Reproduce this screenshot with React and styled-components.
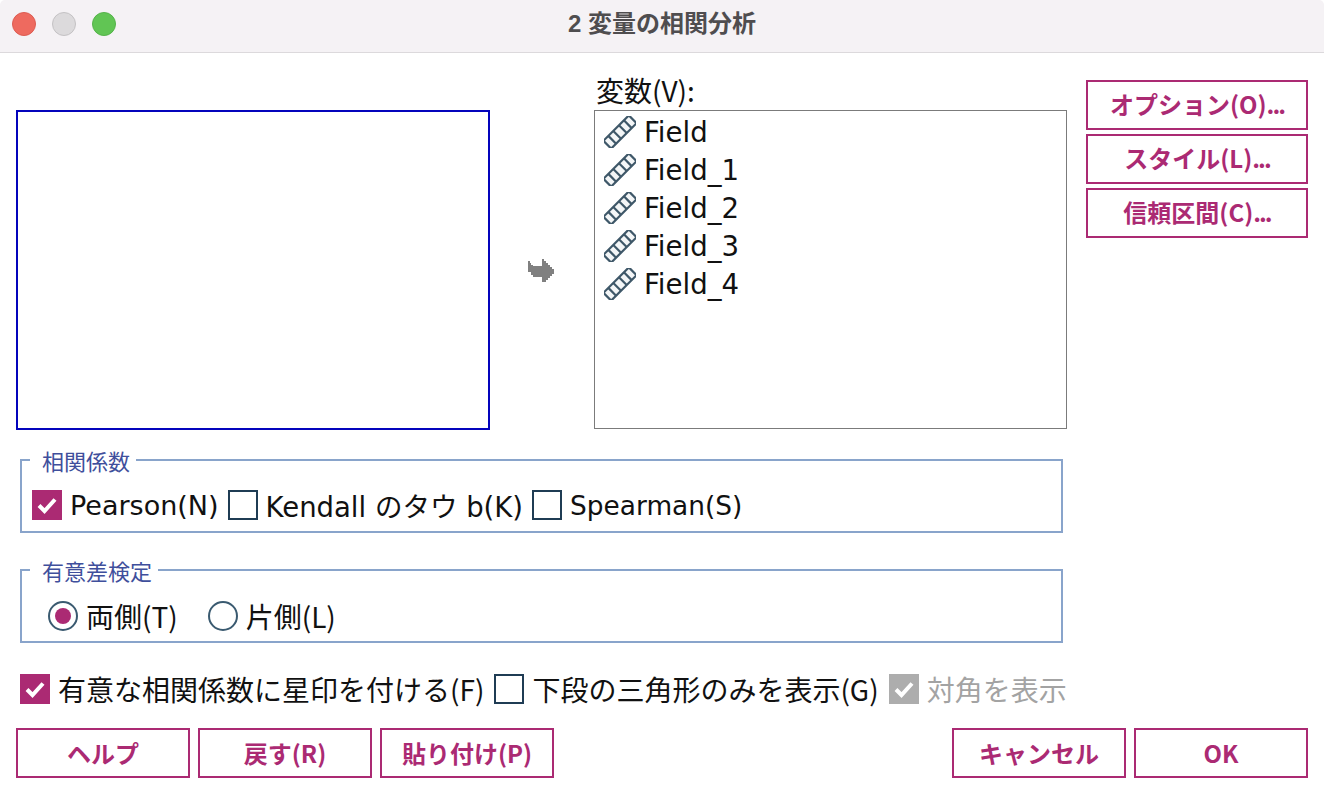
import styled, { createGlobalStyle } from 'styled-components';

const LATIN_FONT = '"DejaVu Sans", "Noto Sans CJK JP", sans-serif';
const CJK_FONT = '"Noto Sans CJK JP", "DejaVu Sans", sans-serif';
const ACCENT = '#ab2a73';

const GlobalStyle = createGlobalStyle`
  html, body {
    margin: 0;
    background: #fff;
  }
  * {
    box-sizing: border-box;
  }
`;

const Window = styled.div`
  width: 1324px;
  height: 800px;
  display: flex;
  flex-direction: column;
  background: #fff;
  font-family: ${LATIN_FONT};
  color: #111;
  overflow: hidden;
`;

const TitleBar = styled.header`
  height: 53px;
  flex: none;
  display: grid;
  grid-template-columns: 1fr auto 1fr;
  align-items: center;
  padding: 0 12px 5px;
  background: #f5f2f5;
  border-bottom: 1px solid #dcd9dc;
  border-radius: 5px 5px 0 0;
`;

const Lights = styled.div`
  display: flex;
  gap: 16px;
`;

const Light = styled.span`
  width: 24px;
  height: 24px;
  border-radius: 50%;
  background: ${(p) => p.$color};
  border: 1px solid ${(p) => p.$edge};
`;

const Title = styled.h1`
  margin: 0;
  font-family: "Liberation Sans", "Noto Sans CJK JP", sans-serif;
  font-size: 24px;
  line-height: 30px;
  font-weight: 700;
  color: #4f4d4f;
`;

const Content = styled.main`
  flex: 1;
  padding: 27px 16px 0;
  display: flex;
  flex-direction: column;
`;

const TopRow = styled.div`
  display: flex;
  height: 350px;
`;

const SourceList = styled.div`
  width: 474px;
  height: 320px;
  margin-top: 30px;
  border: 2px solid #0404bc;
`;

const ArrowColumn = styled.div`
  width: 104px;
  display: flex;
  justify-content: center;
  padding-top: 179px;
`;

const VariableColumn = styled.div`
  width: 473px;
  display: flex;
  flex-direction: column;
`;

const ListLabel = styled.label`
  height: 30px;
  padding-left: 2px;
  font-family: ${CJK_FONT};
  font-size: 28px;
  line-height: 20px;
`;

const VariableList = styled.ul`
  height: 319px;
  margin: 0;
  padding: 2px 0 0 9px;
  list-style: none;
  border: 1px solid #7b7b7b;
`;

const VariableRow = styled.li`
  height: 38px;
  display: flex;
  align-items: center;
  gap: 8px;
  font-size: 27.6px;
`;

const SideButtons = styled.div`
  margin-left: 19px;
  width: 222px;
  display: flex;
  flex-direction: column;
  gap: 4px;
`;

const ActionButton = styled.button`
  width: 174px;
  height: 50px;
  padding: 0 0 2px;
  background: #fff;
  border: 2px solid ${ACCENT};
  color: ${ACCENT};
  font-family: ${CJK_FONT};
  font-size: 24px;
  font-weight: 700;
`;

const SideButton = styled(ActionButton)`
  width: 222px;
  padding-bottom: 4px;
`;

const Dots = styled.span`
  letter-spacing: -2px;
`;

const Group = styled.fieldset`
  width: 1043px;
  height: 85px;
  margin: ${(p) => p.$top} 0 0 4px;
  padding: 0;
  border: 2px solid #89a4cb;
`;

const GroupTitle = styled.legend`
  margin-left: 8px;
  padding: 0 6px 0 12px;
  font-family: ${CJK_FONT};
  font-size: 22px;
  line-height: 24px;
  color: #3f4f9c;
`;

const GroupBody = styled.div`
  display: flex;
  padding: ${(p) => p.$top} 0 0 ${(p) => p.$inset};
  gap: ${(p) => p.$gap};
`;

const Option = styled.label`
  height: 30px;
  display: inline-flex;
  align-items: center;
  gap: 8px;
  font-family: ${(p) => (p.$cjk ? CJK_FONT : LATIN_FONT)};
  font-size: ${(p) => p.$size || '27px'};
  color: ${(p) => (p.$disabled ? '#a3a3a3' : '#111')};
  white-space: nowrap;
`;

const CheckBox = styled.span`
  width: 30px;
  height: 30px;
  flex: none;
  display: flex;
  align-items: center;
  justify-content: center;
  background: ${(p) => (p.$disabled ? '#adadad' : p.$checked ? ACCENT : '#fff')};
  border: ${(p) => (p.$checked || p.$disabled ? 'none' : '2px solid #1f3c54')};
`;

const Radio = styled.span`
  width: 30px;
  height: 30px;
  flex: none;
  display: flex;
  align-items: center;
  justify-content: center;
  border-radius: 50%;
  border: 2px solid #3a5a70;
  &::after {
    content: '';
    width: 16px;
    height: 16px;
    border-radius: 50%;
    background: ${(p) => (p.$checked ? ACCENT : 'transparent')};
  }
`;

const OptionsRow = styled.div`
  margin: 31px 0 0 4px;
  height: 30px;
  display: flex;
  align-items: center;
  gap: 10px;
`;

const Footer = styled.footer`
  margin-top: 24px;
  display: flex;
  gap: 8px;
`;

const Spacer = styled.div`
  flex: 1;
`;

function Tick() {
  return (
    <svg width="20" height="17" viewBox="0 0 20 17" aria-hidden="true">
      <path d="M2 8.5l5.5 5.5L18 2.5" fill="none" stroke="#fff" strokeWidth="4" />
    </svg>
  );
}

function ScaleIcon() {
  return (
    <svg width="32" height="32" viewBox="0 0 32 32" aria-hidden="true">
      <g transform="rotate(-45 16 16)" fill="#f4f6f7" stroke="#3f5869" strokeWidth="2.2">
        <rect x="-2" y="10.5" width="36" height="11" rx="1.5" />
        <path d="M5 10.5v11M12 10.5v11M20 10.5v11M27 10.5v11" fill="none" />
      </g>
    </svg>
  );
}

function MoveArrow() {
  return (
    <svg width="28" height="23" viewBox="8 8 28 23" shapeRendering="crispEdges" aria-hidden="true">
      <path d="M8 10h2v2h1v2h2v1h9V8h2v2h2v2h2v2h2v2h2v2h2v5h-2v2h-2v2h-2v2h-2v2h-4v-5H13v-2h-2v-3H8z" fill="#808080" />
    </svg>
  );
}

const variables = ['Field', 'Field_1', 'Field_2', 'Field_3', 'Field_4'];

export default function App() {
  return (
    <Window>
      <GlobalStyle />
      <TitleBar>
        <Lights>
          <Light $color="#ee6a5f" $edge="#dd5c52" />
          <Light $color="#dcdadc" $edge="#c4c2c4" />
          <Light $color="#61c554" $edge="#55b34a" />
        </Lights>
        <Title>2 変量の相関分析</Title>
      </TitleBar>
      <Content>
        <TopRow>
          <SourceList />
          <ArrowColumn>
            <div>
              <MoveArrow />
            </div>
          </ArrowColumn>
          <VariableColumn>
            <ListLabel>変数(V):</ListLabel>
            <VariableList>
              {variables.map((name) => (
                <VariableRow key={name}>
                  <ScaleIcon />
                  {name}
                </VariableRow>
              ))}
            </VariableList>
          </VariableColumn>
          <SideButtons>
            <SideButton>オプション(O)<Dots>...</Dots></SideButton>
            <SideButton>スタイル(L)<Dots>...</Dots></SideButton>
            <SideButton>信頼区間(C)<Dots>...</Dots></SideButton>
          </SideButtons>
        </TopRow>
        <Group $top="18px">
          <GroupTitle>相関係数</GroupTitle>
          <GroupBody $top="18px" $inset="10px" $gap="9px">
            <Option>
              <CheckBox $checked>
                <Tick />
              </CheckBox>
              Pearson(N)
            </Option>
            <Option $size="27.5px">
              <CheckBox />
              Kendall のタウ b(K)
            </Option>
            <Option $size="26.4px">
              <CheckBox />
              Spearman(S)
            </Option>
          </GroupBody>
        </Group>
        <Group $top="25px">
          <GroupTitle>有意差検定</GroupTitle>
          <GroupBody $top="19px" $inset="26px" $gap="30px">
            <Option $cjk $size="28px">
              <Radio $checked />
              両側(T)
            </Option>
            <Option $cjk $size="28px">
              <Radio />
              片側(L)
            </Option>
          </GroupBody>
        </Group>
        <OptionsRow>
          <Option $cjk $size="28px">
            <CheckBox $checked>
              <Tick />
            </CheckBox>
            有意な相関係数に星印を付ける(F)
          </Option>
          <Option $cjk $size="28px">
            <CheckBox />
            下段の三角形のみを表示(G)
          </Option>
          <Option $cjk $size="28px" $disabled>
            <CheckBox $disabled>
              <Tick />
            </CheckBox>
            対角を表示
          </Option>
        </OptionsRow>
        <Footer>
          <ActionButton>ヘルプ</ActionButton>
          <ActionButton>戻す(R)</ActionButton>
          <ActionButton>貼り付け(P)</ActionButton>
          <Spacer />
          <ActionButton>キャンセル</ActionButton>
          <ActionButton>OK</ActionButton>
        </Footer>
      </Content>
    </Window>
  );
}
